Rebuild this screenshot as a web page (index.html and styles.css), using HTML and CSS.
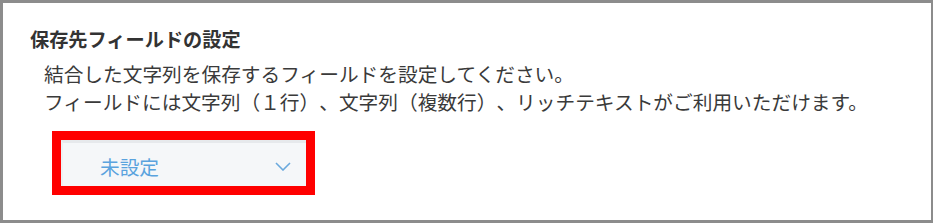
FILE: index.html
```html
<!DOCTYPE html>
<html lang="ja">
<head>
    <meta charset="UTF-8">
    <meta name="viewport" content="width=device-width, initial-scale=1.0">
    <title>保存先フィールドの設定</title>
    <link rel="stylesheet" href="styles.css">
</head>
<body>
    <div class="panel">
        <div class="panel-title">保存先フィールドの設定</div>
        <div class="panel-desc">
            <p>結合した文字列を保存するフィールドを設定してください。</p>
            <p>フィールドには文字列（１行）、文字列（複数行）、リッチテキストがご利用いただけます。</p>
        </div>

        <!-- 強調枠付きのセレクト -->
        <div class="highlight">
            <div class="select">
                <span class="select-value">未設定</span>
                <svg class="select-arrow" width="16" height="9" viewBox="0 0 16 9">
                    <path d="M1 1 L8 8 L15 1" fill="none" stroke="#6aa9dd" stroke-width="1.6"/>
                </svg>
            </div>
        </div>
    </div>
</body>
</html>
```

FILE: styles.css
```css
body {
    margin: 0;
    font-family: "Noto Sans CJK JP", "Noto Sans", sans-serif;
    color: #333;
    background: #fff;
    text-spacing-trim: space-all;
}

/* 外枠 */
.panel {
    box-sizing: border-box;
    width: 933px;
    height: 223px;
    border: 3px solid #8c8c8c;
    border-right-width: 2px;
    padding: 22px 0 0 27px;
}

.panel-title {
    font-size: 19.2px;
    line-height: 28px;
    font-weight: bold;
    color: #333;
}

.panel-desc {
    margin: 7px 0 0 14px;
    font-size: 19.7px;
    line-height: 28px;
    color: #3a3a3a;
}

.panel-desc p {
    margin: 0;
}

/* 赤い強調枠 */
.highlight {
    width: 245px;
    margin: 15px 0 0 22px;
    border: 9px solid #ff0000;
}

.select {
    box-sizing: border-box;
    height: 46px;
    display: flex;
    align-items: center;
    justify-content: space-between;
    padding: 0 15px 0 37px;
    background: #f5f7f9;
    border-top: 3px solid #e6e9ec;
    border-left: 2px solid #eef1f3;
}

.select-value {
    font-size: 19.7px;
    color: #5aa3de;
    padding-top: 4px;
}

.select-arrow {
    display: block;
    margin-top: 4px;
}
```
